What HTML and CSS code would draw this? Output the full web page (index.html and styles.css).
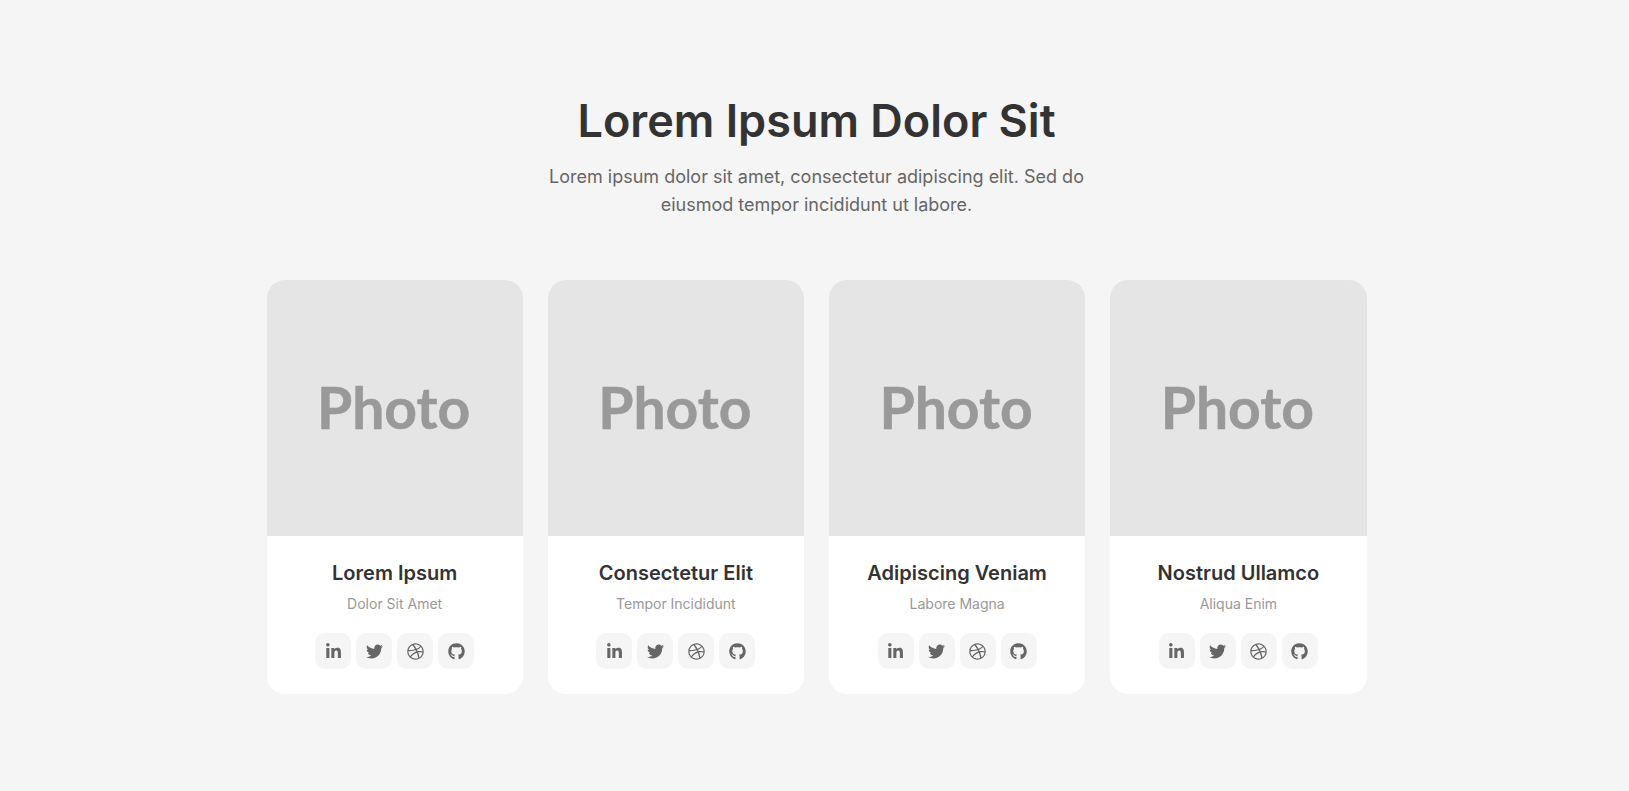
FILE: index.html
```html
<!DOCTYPE html>
<html lang="en">
<head>
    <meta charset="UTF-8">
    <title>Team</title>
    <link rel="stylesheet" href="styles.css">
</head>
<body>
    <svg class="icon-defs" aria-hidden="true">
        <symbol id="icon-linkedin" viewBox="0 0 448 512">
            <path fill="currentColor" d="M100.28 448H7.4V148.9h92.88zM53.79 108.1C24.09 108.1 0 83.5 0 53.8a53.79 53.79 0 0 1 107.58 0c0 29.7-24.1 54.3-53.79 54.3zM447.9 448h-92.68V302.4c0-34.7-.7-79.2-48.29-79.2-48.29 0-55.69 37.7-55.69 76.7V448h-92.78V148.9h89.08v40.8h1.3c12.4-23.5 42.69-48.3 87.88-48.3 94 0 111.28 61.9 111.28 142.3V448z"/>
        </symbol>
        <symbol id="icon-twitter" viewBox="0 0 512 512">
            <path fill="currentColor" d="M459.37 151.716c.325 4.548.325 9.097.325 13.645 0 138.72-105.583 298.558-298.558 298.558-59.452 0-114.68-17.219-161.137-47.106 8.447.974 16.568 1.299 25.34 1.299 49.055 0 94.213-16.568 130.274-44.832-46.132-.975-84.792-31.188-98.112-72.772 6.498.974 12.995 1.624 19.818 1.624 9.421 0 18.843-1.3 27.614-3.573-48.081-9.747-84.143-51.98-84.143-102.985v-1.299c13.969 7.797 30.214 12.67 47.431 13.319-28.264-18.843-46.781-51.005-46.781-87.391 0-19.492 5.197-37.36 14.294-52.954 51.655 63.675 129.3 105.258 216.365 109.807-1.624-7.797-2.599-15.918-2.599-24.04 0-57.828 46.782-104.934 104.934-104.934 30.213 0 57.502 12.67 76.67 33.137 23.715-4.548 46.456-13.645 66.599-25.34-7.798 24.366-24.366 44.833-46.132 58.452 21.117-2.273 41.584-8.122 60.426-16.243-14.292 20.791-32.161 39.308-52.628 54.253z"/>
        </symbol>
        <symbol id="icon-dribbble" viewBox="0 0 512 512">
            <path fill="currentColor" d="M256 8C119.252 8 8 119.252 8 256s111.252 248 248 248 248-111.252 248-248S392.748 8 256 8zm163.97 114.366c29.503 36.046 47.369 81.957 47.835 131.955-6.984-1.477-77.018-15.682-147.502-6.818-5.752-14.041-11.181-26.393-18.617-41.614 78.321-31.977 113.818-77.482 118.284-83.523zM396.421 97.87c-3.81 5.427-35.697 48.286-111.021 76.519-34.712-63.776-73.185-116.168-79.04-124.008 67.176-16.193 137.966 1.27 190.061 47.489zm-230.48-33.25c5.585 7.659 43.438 60.116 78.537 122.509-99.087 26.313-186.36 25.934-195.834 25.809C62.38 147.205 106.678 92.573 165.941 64.62zM44.17 256.323c0-2.166.043-4.322.108-6.473 9.268.19 111.92 1.513 217.706-30.146 6.064 11.868 11.857 23.915 17.174 35.949-76.599 21.575-146.194 83.527-180.531 142.306C64.794 360.405 44.17 310.73 44.17 256.323zm81.807 167.113c22.127-45.233 82.178-103.622 167.579-132.756 29.74 77.283 42.039 142.053 45.189 160.638-68.112 29.013-150.015 21.053-212.768-27.882zm248.38 8.489c-2.171-12.886-13.446-74.897-41.152-151.033 66.38-10.626 124.7 6.768 131.947 9.055-9.442 58.941-43.273 109.844-90.795 141.978z"/>
        </symbol>
        <symbol id="icon-github" viewBox="0 0 496 512">
            <path fill="currentColor" d="M165.9 397.4c0 2-2.3 3.6-5.2 3.6-3.3 0-5.6-1.6-5.6-3.6 0-2 2.3-3.6 5.2-3.6 3-.3 5.6 1.3 5.6 3.6zm-31.1-4.5c-.7 2 1.3 4.3 4.3 4.9 2.6 1 5.6 0 6.2-2s-1.3-4.3-4.3-5c-2.6-.7-5.500.3-6.200 2.100zm44.200-1.700c-2.900.7-4.900 2.600-4.600 4.900.3 2 2.900 3.300 5.900 2.600 2.900-.7 4.900-2.600 4.600-4.600-.3-1.900-3-3.200-5.900-2.900zM244.800 8C106.100 8 0 113.300 0 252c0 110.900 69.800 205.800 169.500 239.200 12.800 2.300 17.300-5.600 17.300-12.100 0-6.200-.3-40.400-.3-61.400 0 0-70 15-84.700-29.800 0 0-11.400-29.100-27.800-36.600 0 0-22.900-15.700 1.600-15.400 0 0 24.900 2 38.600 25.800 21.900 38.600 58.600 27.500 72.900 20.900 2.300-16 8.800-27.100 16-33.700-55.900-6.200-112.300-14.300-112.300-110.500 0-27.500 7.600-41.300 23.600-58.900-2.600-6.500-11.100-33.300 2.600-67.900 20.900-6.500 69 27 69 27 20-5.600 41.500-8.500 62.800-8.500s42.800 2.900 62.800 8.500c0 0 48.100-33.600 69-27 13.700 34.700 5.200 61.400 2.600 67.900 16 17.700 25.800 31.500 25.800 58.900 0 96.500-58.900 104.200-114.800 110.500 9.200 7.900 17 22.900 17 46.400 0 33.700-.3 75.400-.3 83.600 0 6.500 4.600 14.400 17.300 12.100C428.200 457.800 496 362.900 496 252 496 113.300 383.500 8 244.800 8z"/>
        </symbol>
    </svg>

    <section class="team">
        <header class="team-header">
            <h1>Lorem Ipsum Dolor Sit</h1>
            <p>Lorem ipsum dolor sit amet, consectetur adipiscing elit. Sed do eiusmod tempor incididunt ut labore.</p>
        </header>

        <div class="team-grid">
            <article class="card">
                <div class="card-photo"><span>Photo</span></div>
                <div class="card-body">
                    <h3>Lorem Ipsum</h3>
                    <p class="card-role">Dolor Sit Amet</p>
                    <div class="socials">
                        <a class="social-link" href="#"><svg><use href="#icon-linkedin"/></svg></a>
                        <a class="social-link" href="#"><svg><use href="#icon-twitter"/></svg></a>
                        <a class="social-link" href="#"><svg><use href="#icon-dribbble"/></svg></a>
                        <a class="social-link" href="#"><svg><use href="#icon-github"/></svg></a>
                    </div>
                </div>
            </article>

            <article class="card">
                <div class="card-photo"><span>Photo</span></div>
                <div class="card-body">
                    <h3>Consectetur Elit</h3>
                    <p class="card-role">Tempor Incididunt</p>
                    <div class="socials">
                        <a class="social-link" href="#"><svg><use href="#icon-linkedin"/></svg></a>
                        <a class="social-link" href="#"><svg><use href="#icon-twitter"/></svg></a>
                        <a class="social-link" href="#"><svg><use href="#icon-dribbble"/></svg></a>
                        <a class="social-link" href="#"><svg><use href="#icon-github"/></svg></a>
                    </div>
                </div>
            </article>

            <article class="card">
                <div class="card-photo"><span>Photo</span></div>
                <div class="card-body">
                    <h3>Adipiscing Veniam</h3>
                    <p class="card-role">Labore Magna</p>
                    <div class="socials">
                        <a class="social-link" href="#"><svg><use href="#icon-linkedin"/></svg></a>
                        <a class="social-link" href="#"><svg><use href="#icon-twitter"/></svg></a>
                        <a class="social-link" href="#"><svg><use href="#icon-dribbble"/></svg></a>
                        <a class="social-link" href="#"><svg><use href="#icon-github"/></svg></a>
                    </div>
                </div>
            </article>

            <article class="card">
                <div class="card-photo"><span>Photo</span></div>
                <div class="card-body">
                    <h3>Nostrud Ullamco</h3>
                    <p class="card-role">Aliqua Enim</p>
                    <div class="socials">
                        <a class="social-link" href="#"><svg><use href="#icon-linkedin"/></svg></a>
                        <a class="social-link" href="#"><svg><use href="#icon-twitter"/></svg></a>
                        <a class="social-link" href="#"><svg><use href="#icon-dribbble"/></svg></a>
                        <a class="social-link" href="#"><svg><use href="#icon-github"/></svg></a>
                    </div>
                </div>
            </article>
        </div>
    </section>
</body>
</html>
```

FILE: styles.css
```css
* {
    box-sizing: border-box;
    margin: 0;
    padding: 0;
}
body {
    font-family: 'Inter', sans-serif;
    background-color: #f5f5f5;
    color: #333333;
    padding-left: 4px;
}
.icon-defs {
    display: none;
}
.team {
    max-width: 1100px;
    margin: 0 auto;
    padding: 94px 0 80px;
}
.team-header {
    text-align: center;
    margin-bottom: 61px;
}
.team-header h1 {
    font-size: 45px;
    font-weight: 600;
    line-height: 54px;
    margin-bottom: 15px;
}
.team-header p {
    max-width: 560px;
    margin: 0 auto;
    font-size: 18px;
    line-height: 28px;
    color: #666666;
}
.team-grid {
    display: grid;
    grid-template-columns: repeat(4, 1fr);
    gap: 25px;
}
.card {
    background-color: #ffffff;
    border-radius: 18px;
    overflow: hidden;
    text-align: center;
}
.card-photo {
    height: 256px;
    display: flex;
    align-items: center;
    justify-content: center;
    padding: 0 2px 2px 0;
    background-color: #e5e5e5;
    color: #999999;
    font-family: 'Lato', sans-serif;
    font-size: 57px;
    font-weight: 700;
}
.card-photo span {
    -webkit-text-stroke: 0.5px #999999;
    filter: blur(0.4px);
}
.card-body {
    padding: 25px 20px 25px;
}
.card-body h3 {
    font-size: 20px;
    font-weight: 600;
    line-height: 24px;
    margin-bottom: 8px;
}
.card-role {
    font-size: 14px;
    line-height: 21px;
    color: #999999;
    margin-bottom: 19px;
}
.socials {
    display: flex;
    justify-content: center;
    gap: 5px;
}
.social-link {
    width: 36px;
    height: 36px;
    display: flex;
    align-items: center;
    justify-content: center;
    background-color: #f5f5f5;
    border-radius: 10px;
    color: #666666;
}
.social-link svg {
    width: 17px;
    height: 17px;
}
```
